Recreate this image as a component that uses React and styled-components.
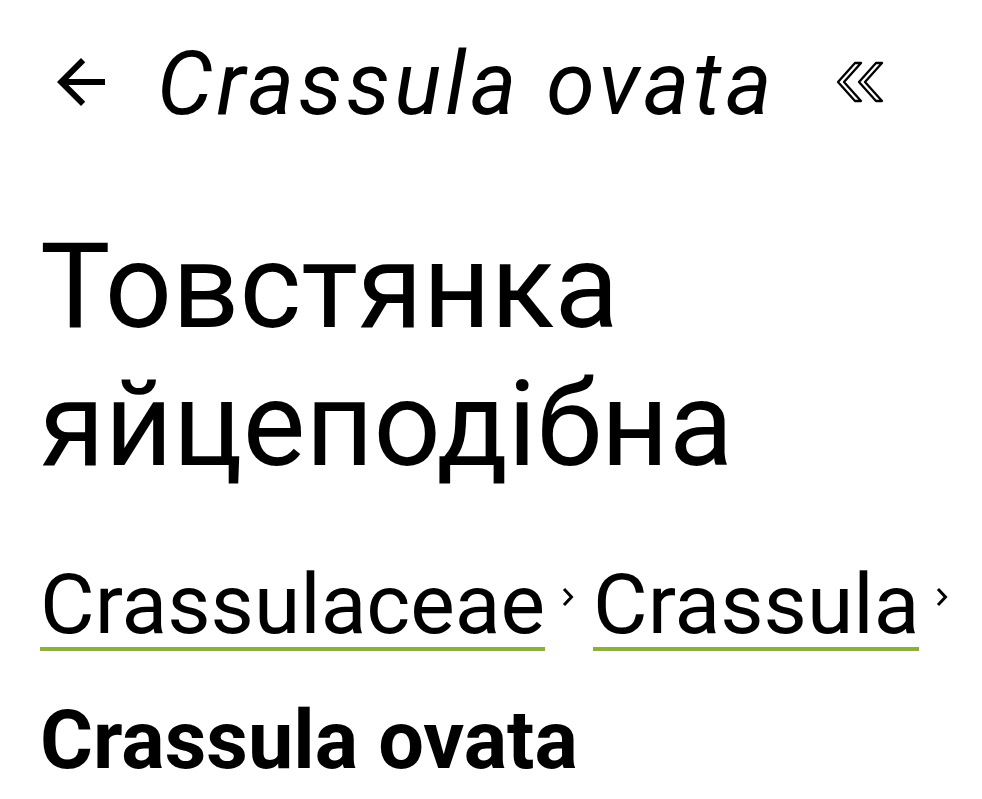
import React from 'react';
import styled, { createGlobalStyle } from 'styled-components';

const GlobalStyle = createGlobalStyle`
    body {
        margin: 0;
        background: #ffffff;
        font-family: Roboto, "Noto Sans", sans-serif;
        color: #000;
    }
`

const Page = styled.div`
    padding: 0 40px;
`

const TopBar = styled.div`
    display: flex;
    align-items: center;
    height: 140px;
    padding-top: 24px;
    box-sizing: border-box;
`

const IconButton = styled.button`
    border: none;
    background: none;
    padding: 0;
    margin: ${p => p.$margin || '0'};
    display: flex;
    align-items: center;
    justify-content: center;
    width: ${p => p.$w}px;
    height: ${p => p.$h}px;
    color: #000;
`

const BarTitle = styled.h2`
    margin: 4px 0 0 40px;
    font-style: italic;
    font-weight: 400;
    font-size: 88px;
    letter-spacing: 4px;
    line-height: 1;
`

const CommonName = styled.h1`
    margin: 78px 0 0;
    font-weight: 400;
    font-size: 118px;
    line-height: 138px;
`

const Crumbs = styled.nav`
    display: flex;
    align-items: flex-start;
    margin-top: 69px;
`

const Crumb = styled.a`
    font-size: 84px;
    line-height: 1;
    color: #000;
    text-decoration: none;
    border-bottom: 4px solid #8bb13c;
`

const Sep = styled.span`
    display: flex;
    margin: 24px ${p => p.$right}px 0 17px;
`

const Latin = styled.div`
    margin-top: 42px;
    font-weight: 700;
    font-size: 81px;
`

function BackArrow() {
    return (
        <svg width="72" height="72" viewBox="0 0 24 24">
            <path d="M20 11H7.83l5.59-5.59L12 4l-8 8 8 8 1.41-1.41L7.83 13H20v-2z" fill="currentColor" />
        </svg>
    );
}

function Collapse() {
    return (
        <svg width="48" height="44" viewBox="0 0 48 44" fill="none" stroke="currentColor" strokeWidth="2.3" strokeLinejoin="round">
            <path d="M2 22 L19 3 H25 L8 22 L25 41 H19 Z" />
            <path d="M23 22 L40 3 H46 L29 22 L46 41 H40 Z" />
        </svg>
    );
}

function ChevronSmall() {
    return (
        <svg width="12" height="20" viewBox="0 0 12 20" fill="none" stroke="currentColor" strokeWidth="3">
            <path d="M2 2 L9.5 10 L2 18" />
        </svg>
    );
}

export default function App() {
    return (
        <>
            <GlobalStyle />
            <Page>
                <TopBar>
                    <IconButton $w={72} $h={72} $margin="0 0 0 5px"><BackArrow /></IconButton>
                    <BarTitle>Crassula ovata</BarTitle>
                    <IconButton $w={48} $h={44} $margin="0 0 0 60px"><Collapse /></IconButton>
                </TopBar>
                <CommonName>Товстянка яйцеподібна</CommonName>
                <Crumbs>
                    <Crumb href="#">Crassulaceae</Crumb>
                    <Sep $right={19}><ChevronSmall /></Sep>
                    <Crumb href="#">Crassula</Crumb>
                    <Sep $right={0}><ChevronSmall /></Sep>
                </Crumbs>
                <Latin>Crassula ovata</Latin>
            </Page>
        </>
    );
}
